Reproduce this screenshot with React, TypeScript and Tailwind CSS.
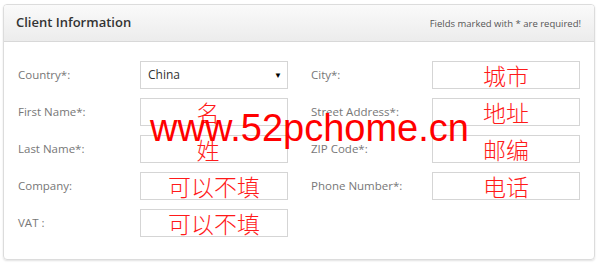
const labelCls = 'text-[11.5px] text-[#777]';
const boxCls =
  'h-[28px] w-[148px] border border-[#d5d5d5] bg-white flex items-center justify-center';
const redCls =
  "text-[23px] leading-none text-[#ff1a1a] font-['Noto_Sans_CJK_SC',sans-serif] font-light";

function Field({ label, value, single }: { label: string; value?: string; single?: boolean }) {
  return (
    <>
      <div className={labelCls}>{label}</div>
      <div className={boxCls}>
        {value && <span className={`${redCls} ${single ? 'pr-[12px]' : ''}`}>{value}</span>}
      </div>
    </>
  );
}

function App() {
  return (
    <div
      className="relative w-[600px] h-[263px] bg-white pt-[4px] pl-[3px] font-['Open_Sans',sans-serif]"
    >
      <div className="w-[592px] h-[256px] border border-[#dcdcdc] rounded-[4px] shadow-[0_1px_2px_rgba(0,0,0,0.12)] overflow-hidden">
        <div className="h-[37px] flex items-center justify-between pl-[12px] pr-[13px] bg-gradient-to-b from-[#fafafa] to-[#ececec] border-b border-[#d8d8d8]">
          <span className="text-[13px] font-semibold text-[#333]">Client Information</span>
          <span className="text-[9.5px] text-[#555] pt-[2px]">Fields marked with * are required!</span>
        </div>
        <div className="flex pt-[19px] pl-[14px]">
          <div className="grid grid-cols-[122px_148px] gap-y-[9px] items-center">
            <div className={labelCls}>Country*:</div>
            <div className="h-[28px] w-[148px] border border-[#d5d5d5] bg-white flex items-center justify-between pl-[7px] pr-[5px]">
              <span className="text-[12px] text-[#333]">China</span>
              <span className="text-[8px] text-black">▼</span>
            </div>
            <Field label="First Name*:" value="名" single />
            <Field label="Last Name*:" value="姓" single />
            <Field label="Company:" value="可以不填" />
            <Field label="VAT :" value="可以不填" />
          </div>
          <div className="ml-[23px] grid grid-cols-[121px_148px] gap-y-[9px] items-center self-start">
            <Field label="City*:" value="城市" />
            <Field label="Street Address*:" value="地址" />
            <Field label="ZIP Code*:" value="邮编" />
            <Field label="Phone Number*:" value="电话" />
          </div>
        </div>
      </div>
      <div className="absolute left-[150px] top-[109px] text-[38px] leading-[38px] text-[#ff0000] font-['Liberation_Sans',sans-serif] whitespace-nowrap">
        www.52pchome.cn
      </div>
    </div>
  );
}

export default App;
